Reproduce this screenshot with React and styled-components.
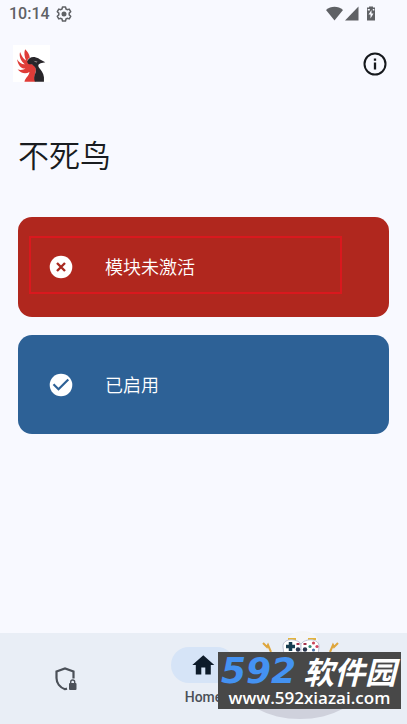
import React from "react";
import styled, { createGlobalStyle } from "styled-components";

const GlobalStyle = createGlobalStyle`
  *, *::before, *::after { box-sizing: border-box; }
  body {
    margin: 0;
    background: #f8f9ff;
    color: #191c20;
    font-family: Roboto, "Noto Sans CJK SC", sans-serif;
  }
`;

const Screen = styled.div`
  position: relative;
  display: flex;
  flex-direction: column;
  min-height: 100vh;
`;

const StatusBar = styled.header`
  display: flex;
  align-items: center;
  justify-content: space-between;
  height: 28px;
  padding: 0 30px 0 9px;
  color: #5f6165;
`;

const StatusGroup = styled.div`
  display: flex;
  align-items: center;
  gap: ${(p) => p.$gap}px;
`;

const Clock = styled.time`
  font-size: 16px;
  font-weight: 500;
  line-height: 20px;
`;

const AppBar = styled.div`
  display: flex;
  align-items: center;
  justify-content: space-between;
  height: 71px;
  padding: 0 20px 0 13px;
`;

const IconButton = styled.button`
  display: flex;
  padding: 0;
  border: 0;
  background: none;
  color: #16191d;
  cursor: pointer;
`;

const Main = styled.main`
  flex: 1;
  display: flex;
  flex-direction: column;
  gap: 18px;
  padding: 31px 18px;
`;

const Title = styled.h1`
  margin: 0 0 21px;
  font-family: "Noto Sans CJK SC", sans-serif;
  font-size: 31px;
  font-weight: 350;
  line-height: 48px;
`;

const StatusCard = styled.section`
  position: relative;
  display: flex;
  align-items: center;
  gap: 32px;
  height: ${(p) => p.$height}px;
  padding: 0 31px;
  border-radius: 14px;
  background: ${(p) => p.$color};
  color: #fff;
`;

const CardLabel = styled.span`
  padding-bottom: 2px;
  font-family: "Noto Sans CJK SC", sans-serif;
  font-size: 18px;
  font-weight: 350;
  line-height: 28px;
`;

const Highlight = styled.div`
  position: absolute;
  inset: 19px 47px 23px 11px;
  border: 2px solid #da181e;
  pointer-events: none;
`;

const NavBar = styled.nav`
  display: grid;
  grid-template-columns: repeat(3, 1fr);
  height: 91px;
  background: #e9eef6;
`;

const NavItem = styled.button`
  display: flex;
  flex-direction: column;
  align-items: center;
  justify-content: center;
  gap: 5px;
  padding: 0 0 4px;
  border: 0;
  background: none;
  color: #4b5058;
  font-family: Roboto, sans-serif;
  font-size: 14px;
  font-weight: 500;
  line-height: 18px;
  cursor: pointer;

  &:first-child {
    padding: 0 4px 0 0;
  }
`;

const Pill = styled.span`
  display: flex;
  align-items: center;
  justify-content: center;
  width: 64px;
  height: 36px;
  border-radius: 18px;
  background: ${(p) => (p.$active ? "#d6e4f7" : "transparent")};
  color: ${(p) => (p.$active ? "#0d1b2a" : "#42474e")};
`;

const Badge = styled.aside`
  position: absolute;
  right: 6px;
  bottom: 15px;
  width: 183px;
  height: 57px;
  pointer-events: none;
`;

const BadgeArt = styled.svg`
  position: absolute;
  left: 0;
  bottom: -12px;
  width: 183px;
  height: 92px;
`;

const BadgePanel = styled.div`
  position: relative;
  display: flex;
  flex-direction: column;
  align-items: center;
  height: 100%;
  background: #484848;
  color: #fff;
  white-space: nowrap;
`;

const BadgeName = styled.div`
  display: flex;
  align-items: center;
  justify-content: space-between;
  width: 100%;
  height: 38px;
  padding: 0 5px 0 3px;
  font-family: "Noto Sans CJK SC", sans-serif;
  font-size: 31px;
  font-weight: 700;
  font-style: italic;
  line-height: 38px;
`;

const BadgeNumber = styled.span`
  color: #4492f2;
  font-family: "DejaVu Sans", sans-serif;
  font-size: 36px;
`;

const BadgeSite = styled.div`
  font-family: "Open Sans", sans-serif;
  font-size: 17px;
  font-weight: 600;
  line-height: 16px;
`;

const GearIcon = () => (
  <svg width="16" height="16" viewBox="0 0 16 16" fill="none" stroke="currentColor" aria-hidden="true">
    <path
      d="M6.500 1h3l.5 2 1.200.7 2-.6 1.500 2.600-1.500 1.400v1.800l1.500 1.400-1.500 2.600-2-.6-1.200.7-.5 2h-3L6 13l-1.200-.7-2 .6-1.500-2.600 1.500-1.400V7.100L1.300 5.700l1.500-2.600 2 .6L6 3z"
      strokeWidth="1.500"
      strokeLinejoin="round"
    />
    <circle cx="8" cy="8" r="2.500" fill="currentColor" stroke="none" />
  </svg>
);

const SignalIcons = () => (
  <svg width="51" height="16" viewBox="0 0 51 16" fill="currentColor" aria-hidden="true">
    <path d="M0 4C5-.3 12-.3 17 4L8.500 14.500z" />
    <path d="M32.500 .5v14H19z" />
    <path d="M41 1.500h2V.5h4v1h2v13h-8z" />
    <path d="M45.500 4l-3 4.500h2v4l3-5h-2z" fill="#f8f9ff" />
    <path d="M41.800 3h2v1.500h-2zM46.800 3h1.500v1.500h-1.500z" fill="#f8f9ff" />
  </svg>
);

const PhoenixLogo = () => (
  <svg width="37" height="37" viewBox="0 0 110 110" role="img" aria-label="不死鸟">
    <rect width="110" height="110" fill="#fff" />
    <path
      d="M36 13C43 20 49 28 50 38C38 44 43 53 60 59C69 65 70 75 66 85C63 94 64 101 67 109H34C37 97 48 91 49 80C38 87 23 84 14 73C24 76 33 73 37 70C26 72 15 61 12 42C19 53 28 58 35 57C24 49 17 34 21 21C26 34 32 43 39 46C34 36 32 23 36 13Z"
      fill="#df3c38"
    />
    <path
      d="M42 50C45 38 58 33 68 37C76 38 78 42 82 44L96 51L82 54C76 56 73 60 77 67C83 75 91 83 92 96V109H65C62 101 62 94 66 85C71 74 67 66 58 59C52 55 46 62 42 50Z"
      fill="#29262a"
    />
    <path d="M61 47l12 3-4 2z" fill="#b9aaa9" />
  </svg>
);

const InfoIcon = () => (
  <svg width="24" height="24" viewBox="0 0 24 24" fill="none" stroke="currentColor" strokeWidth="2" aria-hidden="true">
    <circle cx="12" cy="12" r="10.500" />
    <path d="M12 10.500v7M12 6.500v2.300" strokeWidth="2.300" />
  </svg>
);

const CrossIcon = () => (
  <svg width="24" height="24" viewBox="0 0 24 24" aria-hidden="true">
    <circle cx="12" cy="12" r="11.300" fill="#fff" />
    <path d="M8 8l8 8M16 8l-8 8" stroke="#a8281f" strokeWidth="2.400" />
  </svg>
);

const CheckIcon = () => (
  <svg width="24" height="24" viewBox="0 0 24 24" aria-hidden="true">
    <circle cx="12" cy="12" r="11.300" fill="#fff" />
    <path d="M4.500 11.300l5 5L19.300 6.500" fill="none" stroke="#2d6196" strokeWidth="2.200" />
  </svg>
);

const ShieldLockIcon = () => (
  <svg width="26" height="26" viewBox="0 0 26 26" fill="none" stroke="currentColor" aria-hidden="true">
    <path d="M14 22.600l-2 .6C7 21.500 3.500 17 3.500 12V5.500L12 2.500l8.500 3V12.500" strokeWidth="2.200" />
    <rect x="16" y="17" width="7.500" height="7" rx="1" fill="currentColor" stroke="none" />
    <path d="M17.700 18v-2a2 2 0 0 1 4 0v2" strokeWidth="1.400" />
  </svg>
);

const HomeIcon = () => (
  <svg width="24" height="24" viewBox="0 0 24 24" fill="currentColor" aria-hidden="true">
    <path d="M10.300 21.500v-7h4v7h5.500V12H23.300L12.300 2.200 1.300 12h3.500v9.500z" />
  </svg>
);

const GamepadArt = () => (
  <BadgeArt viewBox="0 0 183 92" aria-hidden="true">
    <ellipse cx="82" cy="56" rx="60" ry="34" fill="#cfd1dc" />
    <ellipse cx="85" cy="12" rx="15" ry="10" fill="#f4f5f8" />
    <g fill="none" stroke="#dfa63c" strokeWidth="2">
      <path d="M45 14l4 4 1-2 3 7" />
      <path d="M120 14l-4 4-1-2-3 7" />
    </g>
    <path d="M70 10h8M90 10h8" stroke="#e2b33c" strokeWidth="2" />
    <g fill="#fff" stroke="#bfc3d5">
      <path d="M65 18c-1-9 14-9 18-3v11H66z" />
      <path d="M101 18c1-9-14-9-18-3v11h17z" />
    </g>
    <path d="M68 17.500h9M72.500 13v9" stroke="#173d50" strokeWidth="3.500" />
    <g fill="#28344c">
      <circle cx="80" cy="20.500" r="2.200" />
      <circle cx="87" cy="20.500" r="2.200" />
    </g>
    <path d="M78.500 15h3M85.500 15h3" stroke="#a4324c" strokeWidth="2" />
    <circle cx="92" cy="17.500" r="1.600" fill="#358c76" />
    <circle cx="99" cy="17.500" r="1.600" fill="#d24861" />
    <circle cx="95.500" cy="14" r="1.600" fill="#c9485a" />
    <circle cx="95.500" cy="21" r="1.600" fill="#4a73a6" />
  </BadgeArt>
);

export default function App() {
  return (
    <>
      <GlobalStyle />
      <Screen>
        <StatusBar>
          <StatusGroup $gap={6}>
            <Clock>10:14</Clock>
            <GearIcon />
          </StatusGroup>
          <SignalIcons />
        </StatusBar>
        <AppBar>
          <PhoenixLogo />
          <IconButton type="button" aria-label="关于">
            <InfoIcon />
          </IconButton>
        </AppBar>
        <Main>
          <Title>不死鸟</Title>
          <StatusCard $color="#b0271e" $height={100}>
            <CrossIcon />
            <CardLabel>模块未激活</CardLabel>
            <Highlight />
          </StatusCard>
          <StatusCard $color="#2d6196" $height={99}>
            <CheckIcon />
            <CardLabel>已启用</CardLabel>
          </StatusCard>
        </Main>
        <NavBar>
          <NavItem type="button" aria-label="隐私">
            <ShieldLockIcon />
          </NavItem>
          <NavItem type="button" aria-current="page">
            <Pill $active>
              <HomeIcon />
            </Pill>
            Home
          </NavItem>
        </NavBar>
        <Badge>
          <GamepadArt />
          <BadgePanel>
            <BadgeName>
              <BadgeNumber>592</BadgeNumber>
              <span>软件园</span>
            </BadgeName>
            <BadgeSite>www.592xiazai.com</BadgeSite>
          </BadgePanel>
        </Badge>
      </Screen>
    </>
  );
}
